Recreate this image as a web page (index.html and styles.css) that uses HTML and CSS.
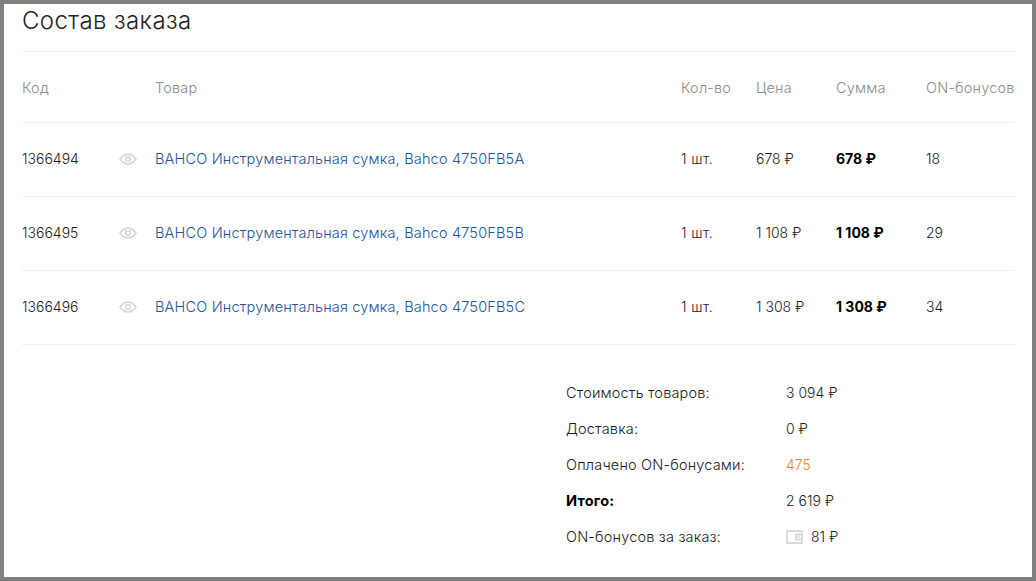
FILE: index.html
```html
<!DOCTYPE html>
<html lang="ru">
<head>
<meta charset="utf-8">
<title>Состав заказа</title>
<link rel="stylesheet" href="styles.css">
</head>
<body>
<main class="frame">
  <h1 class="title">Состав заказа</h1>
  <table class="items">
    <colgroup>
      <col class="c-code"><col class="c-eye"><col class="c-name"><col class="c-qty"><col class="c-price"><col class="c-sum"><col class="c-bonus">
    </colgroup>
    <thead>
      <tr><th>Код</th><th></th><th>Товар</th><th>Кол-во</th><th>Цена</th><th>Сумма</th><th>ON-бонусов</th></tr>
    </thead>
    <tbody>
      <tr>
        <td>1366494</td>
        <td><svg class="eye" viewBox="0 0 18 12"><path d="M1 6C3.500 2.600 6 1 9 1s5.500 1.600 8 5c-2.500 3.400-5 5-8 5S3.500 9.400 1 6z"/><circle cx="9" cy="6" r="2.400"/></svg></td>
        <td><a href="#">BAHCO Инструментальная сумка, Bahco 4750FB5A</a></td>
        <td class="qty">1 шт.</td><td>678 ₽</td><td class="strong">678 ₽</td><td>18</td>
      </tr>
      <tr>
        <td>1366495</td>
        <td><svg class="eye" viewBox="0 0 18 12"><path d="M1 6C3.500 2.600 6 1 9 1s5.500 1.600 8 5c-2.500 3.400-5 5-8 5S3.500 9.400 1 6z"/><circle cx="9" cy="6" r="2.400"/></svg></td>
        <td><a href="#">BAHCO Инструментальная сумка, Bahco 4750FB5B</a></td>
        <td class="qty">1 шт.</td><td>1 108 ₽</td><td class="strong">1 108 ₽</td><td>29</td>
      </tr>
      <tr>
        <td>1366496</td>
        <td><svg class="eye" viewBox="0 0 18 12"><path d="M1 6C3.500 2.600 6 1 9 1s5.500 1.600 8 5c-2.500 3.400-5 5-8 5S3.500 9.400 1 6z"/><circle cx="9" cy="6" r="2.400"/></svg></td>
        <td><a href="#">BAHCO Инструментальная сумка, Bahco 4750FB5C</a></td>
        <td class="qty">1 шт.</td><td>1 308 ₽</td><td class="strong">1 308 ₽</td><td>34</td>
      </tr>
    </tbody>
  </table>
  <dl class="summary">
    <dt>Стоимость товаров:</dt><dd>3 094 ₽</dd>
    <dt>Доставка:</dt><dd>0 ₽</dd>
    <dt>Оплачено ON-бонусами:</dt><dd class="orange">475</dd>
    <dt class="strong">Итого:</dt><dd>2 619 ₽</dd>
    <dt>ON-бонусов за заказ:</dt>
    <dd class="bonus"><svg class="wallet" viewBox="0 0 17 14"><path d="M16 1H1v12h15z"/><path d="M16 4.500h-6v5h6"/><rect class="dot" x="11.500" y="6" width="2" height="2"/></svg>81 ₽</dd>
  </dl>
</main>
</body>
</html>
```

FILE: styles.css
```css
* { box-sizing: border-box; }
html, body { margin: 0; height: 100%; }
body {
  background: #fff;
  font-family: Inter, "Noto Sans", sans-serif;
  font-weight: 300;
  font-size: 14px;
  color: #1c1c1c;
}
.frame {
  height: 581px;
  border: 4px solid #808080;
  padding: 0 17px 0 18px;
  overflow: hidden;
}
.title {
  margin: 0;
  height: 48px;
  border-bottom: 1px solid #eee;
  font-size: 24px;
  line-height: 34px;
  font-weight: 300;
  color: #222;
  letter-spacing: 0.4px;
}
.items {
  width: 993px;
  table-layout: fixed;
  border-collapse: collapse;
}
.c-code { width: 97px; }
.c-eye { width: 36px; }
.c-name { width: 526px; }
.c-qty { width: 75px; }
.c-price { width: 80px; }
.c-sum { width: 90px; }
.c-bonus { width: 89px; }
th {
  height: 70px;
  padding: 2px 0 0;
  text-align: left;
  font-size: 14.500px;
  letter-spacing: 0.180px;
  font-weight: 300;
  color: #8c8c8c;
  white-space: nowrap;
  border-bottom: 1px solid #eee;
}
td {
  height: 74px;
  padding: 0 0 2px;
  white-space: nowrap;
  border-bottom: 1px solid #eee;
}
.qty { letter-spacing: 0.400px; }
a {
  color: #24549c;
  text-decoration: none;
  font-size: 14.500px;
  letter-spacing: 0.180px;
}
.strong { font-weight: 700; color: #000; }
.eye {
  display: block;
  width: 18px;
  height: 12px;
  margin-top: 2px;
  fill: none;
  stroke: #d4d4d4;
  stroke-width: 1.500;
}
.summary {
  display: grid;
  grid-template-columns: 220px auto;
  grid-auto-rows: 36px;
  align-items: center;
  margin: 30px 0 0 544px;
}
.summary dt, .summary dd { margin: 0; }
.summary dt { font-size: 14.500px; letter-spacing: 0.180px; }
.orange { color: #f0842a; }
.bonus { display: flex; align-items: center; gap: 8px; }
.wallet {
  width: 17px;
  height: 14px;
  fill: none;
  stroke: #d9d9d9;
  stroke-width: 1.800;
}
.wallet .dot { fill: #d9d9d9; stroke: none; }
```
